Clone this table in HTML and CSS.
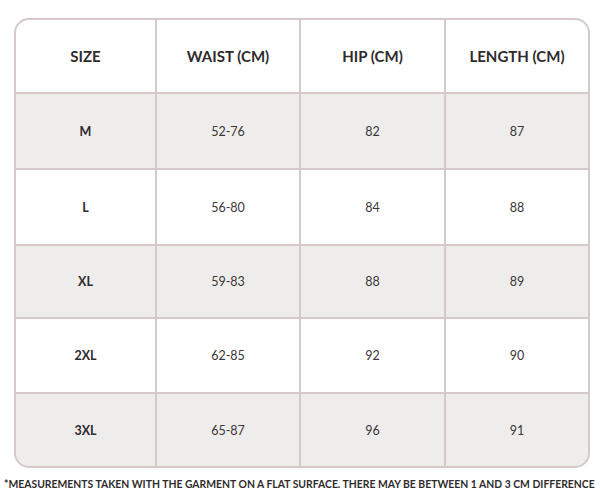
FILE: index.html
```html
<!DOCTYPE html>
<html>
<head>
<meta charset="utf-8">
<link rel="stylesheet" href="styles.css">
</head>
<body>
<div class="chart">
  <div class="cell head">SIZE</div>
  <div class="cell head">WAIST (CM)</div>
  <div class="cell head">HIP (CM)</div>
  <div class="cell head">LENGTH (CM)</div>

  <div class="cell size shade">M</div>
  <div class="cell shade">52-76</div>
  <div class="cell shade">82</div>
  <div class="cell shade">87</div>

  <div class="cell size">L</div>
  <div class="cell">56-80</div>
  <div class="cell">84</div>
  <div class="cell">88</div>

  <div class="cell size shade">XL</div>
  <div class="cell shade">59-83</div>
  <div class="cell shade">88</div>
  <div class="cell shade">89</div>

  <div class="cell size">2XL</div>
  <div class="cell">62-85</div>
  <div class="cell">92</div>
  <div class="cell">90</div>

  <div class="cell size shade bl">3XL</div>
  <div class="cell shade">65-87</div>
  <div class="cell shade">96</div>
  <div class="cell shade br">91</div>
</div>
<p class="note">*MEASUREMENTS TAKEN WITH THE GARMENT ON A FLAT SURFACE. THERE MAY BE BETWEEN 1 AND 3 CM DIFFERENCE</p>
</body>
</html>
```
FILE: styles.css
```css
html, body {
  margin: 0;
  padding: 0;
  background: #ffffff;
  overflow: hidden;
}
body {
  width: 600px;
  height: 500px;
  font-family: "Lato", "DejaVu Sans", sans-serif;
  color: #2f2b2c;
}
.chart {
  margin: 18px 0 0 14px;
  width: 572px;
  padding: 2px;
  background: #d5c9ca;
  border-radius: 15px;
  overflow: hidden;
  display: grid;
  grid-template-columns: 139px 142px 143px 142px;
  grid-template-rows: 72px 74px 74px 71px 73px 72px;
  gap: 2px;
}
.cell {
  background: #ffffff;
  display: flex;
  align-items: center;
  justify-content: center;
  font-size: 12.5px;
  color: #3a3536;
}
.cell.shade { background: #efedec; }
.head {
  font-weight: 700;
  font-size: 15px;
  color: #2f2b2c;
}
.head:first-child { border-top-left-radius: 13px; }
.head:nth-child(4) { border-top-right-radius: 13px; }
.bl { border-bottom-left-radius: 13px; }
.br { border-bottom-right-radius: 13px; }
.size {
  font-weight: 700;
  font-size: 12.5px;
  color: #2f2b2c;
}
.note {
  margin: 10px 0 0 4px;
  font-size: 10.4px;
  font-weight: 700;
  color: #2f2b2c;
  white-space: nowrap;
  letter-spacing: 0;
}
```
